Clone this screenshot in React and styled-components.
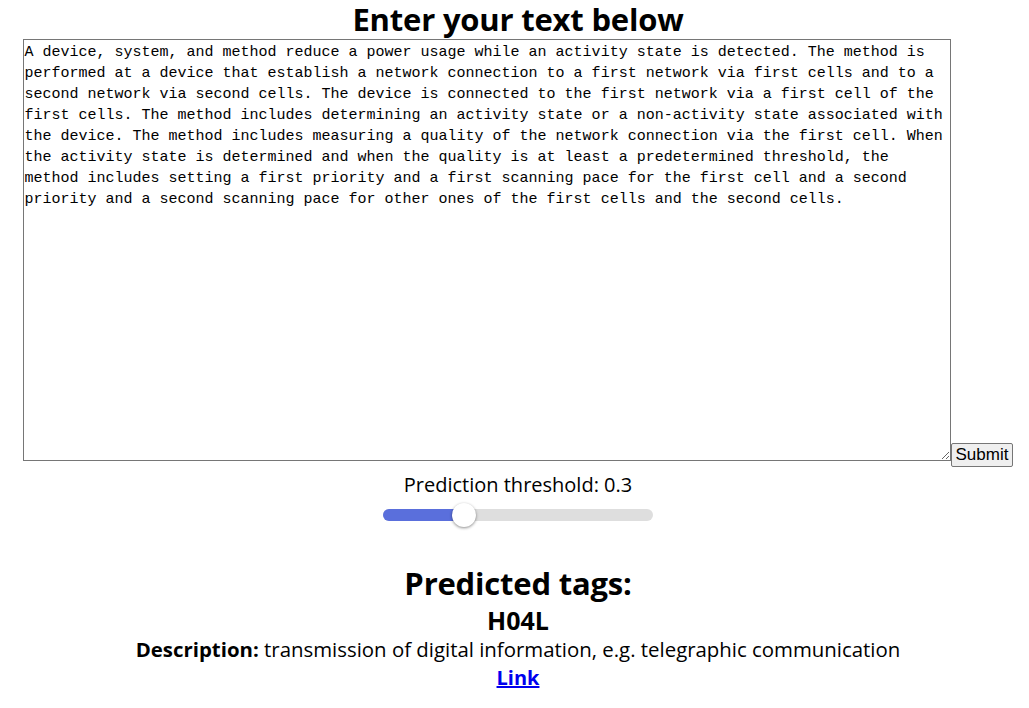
import React, { useState } from 'react';
import styled, { createGlobalStyle } from 'styled-components';

const GlobalStyle = createGlobalStyle`
  body {
    margin: 0 1px 0 8px;
    background: #fff;
    color: #000;
    font-family: "Open Sans", "Noto Sans", sans-serif;
  }
`;

const Page = styled.div`
  display: flex;
  flex-direction: column;
  align-items: center;
`;

const Title = styled.h1`
  margin: 0;
  font-size: 31px;
  line-height: 39px;
  font-weight: 700;
  letter-spacing: -0.2px;
`;

const FormRow = styled.div`
  text-align: center;
  line-height: 0;
`;

const TextBox = styled.textarea`
  box-sizing: border-box;
  width: 928px;
  height: 422px;
  margin: 0;
  padding: 2px 1px;
  border: 1px solid #767676;
  font-family: "Liberation Mono", monospace;
  font-size: 15px;
  line-height: 21px;
  color: #000;
  vertical-align: bottom;
  resize: both;
`;

const SubmitButton = styled.button`
  margin: 0 0 -6px 0;
  padding: 1px 4px;
  font-family: "Liberation Sans", Arial, sans-serif;
  font-size: 17px;
  line-height: 20px;
  color: #000;
  background: #efefef;
  border: 1px solid #767676;
  border-radius: 2px;
  vertical-align: bottom;
`;

const Label = styled.div`
  margin-top: 12px;
  font-size: 20px;
  line-height: 24px;
`;

const Track = styled.div`
  position: relative;
  width: 270px;
  height: 12px;
  margin-top: 12px;
  border-radius: 6px;
  background: #dedede;
`;

const Fill = styled.div`
  height: 100%;
  border-radius: 6px 0 0 6px;
  background: #5a6fdc;
`;

const Thumb = styled.div`
  position: absolute;
  top: 50%;
  width: 24px;
  height: 24px;
  margin: -12px 0 0 -12px;
  border-radius: 50%;
  background: #fff;
  box-shadow: 0 1px 3px rgba(0, 0, 0, 0.45);
`;

const ResultTitle = styled.h2`
  margin: 40px 0 0;
  font-size: 31px;
  line-height: 44px;
  font-weight: 700;
  letter-spacing: -0.2px;
`;

const Tag = styled.div`
  font-size: 25px;
  line-height: 30px;
  font-weight: 700;
`;

const Description = styled.div`
  font-size: 20.4px;
  line-height: 28px;
  b {
    font-weight: 700;
  }
`;

const TagLink = styled.a`
  font-size: 20px;
  line-height: 29px;
  font-weight: 700;
  color: #0000ee;
  text-decoration: underline;
`;

const defaultText =
  'A device, system, and method reduce a power usage while an activity state is detected. The method is performed at a device that establish a network connection to a first network via first cells and to a second network via second cells. The device is connected to the first network via a first cell of the first cells. The method includes determining an activity state or a non-activity state associated with the device. The method includes measuring a quality of the network connection via the first cell. When the activity state is determined and when the quality is at least a predetermined threshold, the method includes setting a first priority and a first scanning pace for the first cell and a second priority and a second scanning pace for other ones of the first cells and the second cells.';

function Slider({ value }) {
  const pct = value * 100;
  return (
    <Track>
      <Fill style={{ width: `${pct}%` }} />
      <Thumb style={{ left: `${pct}%` }} />
    </Track>
  );
}

export default function App() {
  const [text, setText] = useState(defaultText);
  const threshold = 0.3;

  return (
    <Page>
      <GlobalStyle />
      <Title>Enter your text below</Title>
      <FormRow>
        <TextBox value={text} onChange={(e) => setText(e.target.value)} />
        <SubmitButton>Submit</SubmitButton>
      </FormRow>
      <Label>Prediction threshold: {threshold}</Label>
      <Slider value={threshold} />
      <ResultTitle>Predicted tags:</ResultTitle>
      <Tag>H04L</Tag>
      <Description>
        <b>Description:</b> transmission of digital information, e.g. telegraphic communication
      </Description>
      <TagLink href="#">Link</TagLink>
    </Page>
  );
}
